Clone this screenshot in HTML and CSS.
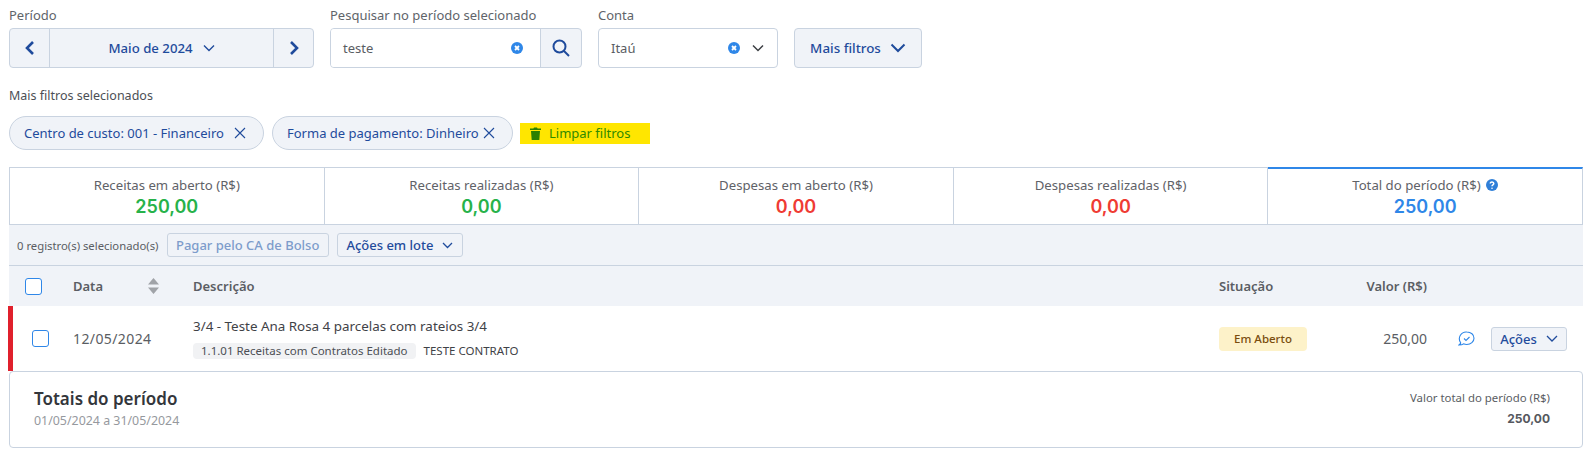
FILE: index.html
```html
<!DOCTYPE html>
<html lang="pt-BR">

<head>
    <meta charset="UTF-8">
    <title>Contas a receber</title>
    <link rel="stylesheet" href="styles.css">
</head>

<body>
    <div class="filters">
        <div class="field">
            <label class="fieldLabel">Período</label>
            <div class="periodGroup">
                <button class="periodArrow">
                    <svg width="12" height="16" viewBox="0 0 12 16"><path d="M9 2 3 8l6 6" class="thickStroke"/></svg>
                </button>
                <button class="periodMain">Maio de 2024
                    <svg width="12" height="8" viewBox="0 0 12 8"><path d="m1 1.500 5 5 5-5" class="thinStroke"/></svg>
                </button>
                <button class="periodArrow">
                    <svg width="12" height="16" viewBox="0 0 12 16"><path d="m3 2 6 6-6 6" class="thickStroke"/></svg>
                </button>
            </div>
        </div>
        <div class="field">
            <label class="fieldLabel">Pesquisar no período selecionado</label>
            <div class="searchGroup">
                <div class="searchInput">
                    <span>teste</span>
                    <svg class="clearIcon" width="12" height="12" viewBox="0 0 12 12"><circle cx="6" cy="6" r="6"/><path d="m4 4 4 4m0-4-4 4"/></svg>
                </div>
                <button class="searchBtn">
                    <svg width="18" height="18" viewBox="0 0 18 18"><circle cx="7.500" cy="7.500" r="6" class="searchStroke"/><path d="m12 12 5 5" class="searchStroke"/></svg>
                </button>
            </div>
        </div>
        <div class="field">
            <label class="fieldLabel">Conta</label>
            <div class="accountSelect">
                <span class="accountName">Itaú</span>
                <svg class="clearIcon" width="12" height="12" viewBox="0 0 12 12"><circle cx="6" cy="6" r="6"/><path d="m4 4 4 4m0-4-4 4"/></svg>
                <svg class="accountCaret" width="12" height="8" viewBox="0 0 12 8"><path d="m1 1.500 5 5 5-5"/></svg>
            </div>
        </div>
        <button class="moreFilters">Mais filtros
            <svg width="16" height="10" viewBox="0 0 16 10"><path d="m1.500 1.500 6.500 6.500 6.500-6.500"/></svg>
        </button>
    </div>

    <div class="selectedTitle">Mais filtros selecionados</div>
    <div class="chips">
        <span class="chip">Centro de custo: 001 - Financeiro
            <svg width="12" height="12" viewBox="0 0 12 12"><path d="m1 1 10 10m0-10L1 11"/></svg>
        </span>
        <span class="chip chipSecond">Forma de pagamento: Dinheiro
            <svg width="12" height="12" viewBox="0 0 12 12"><path d="m1 1 10 10m0-10L1 11"/></svg>
        </span>
        <span class="clearFilters">
            <svg width="11" height="13" viewBox="0 0 11 13"><path d="M0 1.600h3.400L4 .4h3l.6 1.200H11v1.500H0zM1 4h9l-.7 9H1.700z"/></svg>
            Limpar filtros
        </span>
    </div>

    <div class="kpis">
        <div class="kpi">
            <div class="kpiLabel">Receitas em aberto (R$)</div>
            <div class="kpiValue green">250,00</div>
        </div>
        <div class="kpi">
            <div class="kpiLabel">Receitas realizadas (R$)</div>
            <div class="kpiValue green">0,00</div>
        </div>
        <div class="kpi">
            <div class="kpiLabel">Despesas em aberto (R$)</div>
            <div class="kpiValue red">0,00</div>
        </div>
        <div class="kpi">
            <div class="kpiLabel">Despesas realizadas (R$)</div>
            <div class="kpiValue red">0,00</div>
        </div>
        <div class="kpi kpiActive">
            <div class="kpiLabel">Total do período (R$)
                <svg class="helpIcon" width="12" height="12" viewBox="0 0 12 12"><circle cx="6" cy="6" r="6"/><path d="M4.300 4.600c0-2.300 3.500-2.100 3.500 0 0 1.400-1.800 1.200-1.800 2.600"/><circle cx="6" cy="9.200" r=".8" class="helpDot"/></svg>
            </div>
            <div class="kpiValue blue">250,00</div>
        </div>
    </div>

    <div class="toolbar">
        <span class="selectedCount">0 registro(s) selecionado(s)</span>
        <button class="smallBtn disabledBtn">Pagar pelo CA de Bolso</button>
        <button class="smallBtn">Ações em lote
            <svg width="11" height="7" viewBox="0 0 11 7"><path d="m1 1 4.500 4.500L10 1"/></svg>
        </button>
    </div>

    <div class="tableHead">
        <div class="colCheck"><span class="checkbox"></span></div>
        <div class="colDate">Data
            <svg class="sortIcon" width="11" height="16" viewBox="0 0 11 16"><path d="M5.500 0 11 6.500H0zM5.500 16 0 9.500h11z"/></svg>
        </div>
        <div class="colDesc">Descrição</div>
        <div class="colStatus">Situação</div>
        <div class="colValue">Valor (R$)</div>
        <div class="colActions"></div>
    </div>

    <div class="tableRow">
        <div class="colCheck"><span class="checkbox"></span></div>
        <div class="colDate rowDate">12/05/2024</div>
        <div class="colDesc">
            <div class="rowTitle">3/4 - Teste Ana Rosa 4 parcelas com rateios 3/4</div>
            <div class="rowTags">
                <span class="categoryTag">1.1.01 Receitas com Contratos Editado</span>
                <span class="contractName">TESTE CONTRATO</span>
            </div>
        </div>
        <div class="colStatus"><span class="statusBadge">Em Aberto</span></div>
        <div class="colValue rowValue">250,00</div>
        <div class="colActions">
            <svg class="chatIcon" width="17" height="15" viewBox="0 0 17 15"><path d="M2.500 11.500A6.800 6.800 0 0 1 8.800 1c4.200 0 7.200 2.700 7.200 6.200s-3.200 6.300-7.200 6.300c-1.300 0-2.300-.2-3.300-.7-1 .9-2.500 1.200-4.500 1.200 1-.7 1.500-1.300 1.700-2z"/><path d="m6 7.500 2 2 3.500-3.500"/></svg>
            <button class="smallBtn actionsBtn">Ações
                <svg width="12" height="7" viewBox="0 0 12 7"><path d="m1 1 5 5 5-5"/></svg>
            </button>
        </div>
    </div>

    <div class="totals">
        <div>
            <div class="totalsTitle">Totais do período</div>
            <div class="totalsDates">01/05/2024 a 31/05/2024</div>
        </div>
        <div class="totalsRight">
            <div class="totalsLabel">Valor total do período (R$)</div>
            <div class="totalsValue">250,00</div>
        </div>
    </div>
</body>

</html>
```

FILE: styles.css
```css
body {
    font-family: "Noto Sans", "Open Sans", sans-serif;
    font-size: 13px;
    color: #5a5d63;
    padding: 0 6px 0 9px;
    margin: 0;
    background-color: #fff;
}

button {
    font-family: inherit;
    cursor: pointer;
}

svg path {
    fill: none;
}

/* top filters */
.filters {
    display: flex;
    align-items: flex-end;
    gap: 16px;
    padding-top: 7px;
}

.fieldLabel {
    display: block;
    font-size: 13px;
    line-height: 17px;
    margin-bottom: 4px;
    color: #60646a;
}

.periodGroup,
.searchGroup,
.accountSelect,
.moreFilters {
    display: flex;
    align-items: center;
    height: 40px;
    box-sizing: border-box;
    border: 1px solid #c9d3e0;
    border-radius: 4px;
    background-color: #f0f3f8;
}

.periodGroup {
    width: 305px;
}

.periodArrow {
    width: 39px;
    height: 38px;
    padding: 0;
    border: 0;
    background: none;
    display: flex;
    align-items: center;
    justify-content: center;
}

.periodMain {
    flex: 1;
    height: 38px;
    border: 0;
    border-left: 1px solid #c9d3e0;
    border-right: 1px solid #c9d3e0;
    background: none;
    color: #1f4b9c;
    font-size: 13.2px;
    font-weight: 500;
    display: flex;
    align-items: center;
    justify-content: center;
    gap: 10px;
}

.thickStroke {
    stroke: #1f4b9c;
    stroke-width: 2.6;
}

.thinStroke {
    stroke: #1f4b9c;
    stroke-width: 1.4;
}

.searchGroup {
    width: 252px;
    overflow: hidden;
}

.searchInput {
    flex: 1;
    height: 38px;
    background-color: #fff;
    display: flex;
    align-items: center;
    justify-content: space-between;
    padding: 0 17px 0 12px;
    border-right: 1px solid #c9d3e0;
    font-size: 13px;
}

.clearIcon circle {
    fill: #2f87e8;
}

.clearIcon path {
    stroke: #fff;
    stroke-width: 1.8;
}

.searchBtn {
    width: 40px;
    height: 38px;
    padding: 0;
    border: 0;
    background: none;
    display: flex;
    align-items: center;
    justify-content: center;
}

.searchStroke {
    fill: none;
    stroke: #1f4b9c;
    stroke-width: 2;
}

.accountSelect {
    width: 180px;
    background-color: #fff;
    padding: 0 13px 0 12px;
}

.accountName {
    flex: 1;
    font-size: 13px;
}

.accountCaret {
    margin-left: 12px;
}

.accountCaret path {
    stroke: #3c3f44;
    stroke-width: 1.5;
}

.moreFilters {
    width: 128px;
    justify-content: center;
    gap: 9px;
    color: #1f4b9c;
    font-size: 13.4px;
    font-weight: 500;
}

.moreFilters path {
    stroke: #1f4b9c;
    stroke-width: 2;
}

/* selected filters */
.selectedTitle {
    margin-top: 19px;
    font-size: 12.5px;
    line-height: 17px;
    color: #4c4f55;
}

.chips {
    display: flex;
    align-items: center;
    margin-top: 12px;
}

.chip {
    display: flex;
    align-items: center;
    justify-content: space-between;
    box-sizing: border-box;
    height: 34px;
    width: 255px;
    padding: 0 17px 0 14px;
    border: 1px solid #c9d3e0;
    border-radius: 17px;
    background-color: #f0f3f8;
    color: #1f4b9c;
    font-size: 13px;
}

.chipSecond {
    width: 241px;
    margin-left: 8px;
}

.chip path {
    stroke: #1f4b9c;
    stroke-width: 1.1;
}

.clearFilters {
    display: flex;
    align-items: center;
    gap: 8px;
    height: 21px;
    margin-left: 7px;
    padding: 0 20px 0 10px;
    background-color: #ffe600;
    color: #2f8a00;
    font-size: 13px;
}

.clearFilters svg path {
    fill: #2c8000;
}

/* totals strip */
.kpis {
    display: flex;
    margin-top: 17px;
    border: 1px solid #c9d3e0;
    border-right: 0;
    height: 58px;
    box-sizing: border-box;
}

.kpi {
    flex: 1;
    text-align: center;
    border-right: 1px solid #c9d3e0;
    padding-top: 9px;
}

.kpiActive {
    border-top: 2px solid #2f87e8;
    margin-top: -1px;
    padding-top: 8px;
}

.kpiLabel {
    font-size: 13.2px;
    line-height: 17px;
    color: #5f6268;
}

.kpiValue {
    font-family: "Inter", sans-serif;
    font-size: 18px;
    font-weight: 600;
    line-height: 21px;
    margin-top: 2px;
}

.green {
    color: #27b24a;
}

.red {
    color: #ef3b34;
}

.blue {
    color: #2f87e8;
}

.helpIcon {
    vertical-align: -1px;
    margin-left: 2px;
}

.helpIcon circle {
    fill: #2f7fd8;
}

.helpIcon path {
    stroke: #fff;
    stroke-width: 1.5;
}

.helpIcon .helpDot {
    fill: #fff;
}

/* table */
.toolbar {
    display: flex;
    align-items: center;
    gap: 8px;
    height: 41px;
    box-sizing: border-box;
    padding-left: 8px;
    background-color: #f0f3f8;
    border-bottom: 1px solid #c9d3e0;
}

.selectedCount {
    font-size: 11.3px;
}

.smallBtn {
    height: 24px;
    display: flex;
    align-items: center;
    gap: 9px;
    padding: 0 8.5px;
    border: 1px solid #c9d3e0;
    border-radius: 3px;
    background-color: #f0f3f8;
    color: #1f4b9c;
    font-size: 13px;
    font-weight: 500;
}

.smallBtn path {
    stroke: #1f4b9c;
    stroke-width: 1.3;
}

.disabledBtn {
    color: #7d9ccb;
}

.tableHead,
.tableRow {
    display: flex;
    align-items: center;
}

.tableHead {
    height: 40px;
    background-color: #f0f3f8;
    font-size: 13px;
    font-weight: 600;
    color: #5a5d63;
}

.tableRow {
    height: 65px;
    margin-left: -1px;
    border-left: 5px solid #e0202c;
    box-sizing: border-box;
    background-color: #fff;
}

.colCheck {
    width: 64px;
    padding-left: 16px;
    box-sizing: border-box;
    display: flex;
    align-items: center;
}

.tableRow .colCheck {
    width: 60px;
    padding-left: 19px;
}

.checkbox {
    width: 15px;
    height: 15px;
    border: 1px solid #2f87e8;
    border-radius: 3px;
    background-color: #fff;
}

.colDate {
    width: 120px;
    display: flex;
    align-items: center;
    justify-content: space-between;
    padding-right: 34px;
    box-sizing: border-box;
}

.sortIcon path {
    fill: #a0a3a8;
}

.rowDate {
    font-size: 14px;
    letter-spacing: .4px;
}

.colDesc {
    flex: 1;
    min-width: 0;
}

.rowTitle {
    font-size: 13.4px;
    line-height: 18px;
    color: #3f4247;
}

.tableRow .colDesc {
    padding-bottom: 2px;
}

.rowTags {
    display: flex;
    align-items: center;
    gap: 8px;
    margin-top: 8px;
}

.categoryTag {
    height: 16px;
    line-height: 16px;
    padding: 0 8px;
    border-radius: 4px;
    background-color: #f1f2f4;
    font-size: 11.5px;
    color: #4c4f55;
}

.contractName {
    font-size: 11.5px;
    color: #3f4247;
}

.colStatus {
    width: 132px;
}

.statusBadge {
    display: inline-block;
    width: 88px;
    height: 24px;
    line-height: 24px;
    text-align: center;
    border-radius: 4px;
    background-color: #fdf2c9;
    color: #7a4d0e;
    font-size: 11.5px;
    font-weight: 500;
}

.colValue {
    width: 76px;
    text-align: right;
}

.rowValue {
    font-size: 14px;
}

.colActions {
    width: 156px;
    padding-left: 31px;
    padding-right: 16px;
    box-sizing: border-box;
    display: flex;
    align-items: center;
    justify-content: space-between;
}

.chatIcon path {
    stroke: #2f87e8;
    stroke-width: 1.1;
}

.actionsBtn {
    width: 76px;
    justify-content: center;
    padding: 0;
}

/* period totals */
.totals {
    display: flex;
    justify-content: space-between;
    height: 77px;
    box-sizing: border-box;
    padding: 16px 32px 0 24px;
    border: 1px solid #c9d3e0;
    border-radius: 4px;
}

.totalsTitle {
    font-size: 17px;
    font-weight: 600;
    line-height: 22px;
    color: #33363b;
}

.totalsDates {
    margin-top: 2px;
    font-size: 12.4px;
    color: #96999e;
}

.totalsRight {
    text-align: right;
}

.totalsLabel {
    font-size: 11.4px;
    line-height: 20px;
    color: #5a5d63;
}

.totalsValue {
    margin-top: 3px;
    font-family: "Inter", sans-serif;
    font-size: 12px;
    font-weight: 700;
    color: #55585e;
}
```
